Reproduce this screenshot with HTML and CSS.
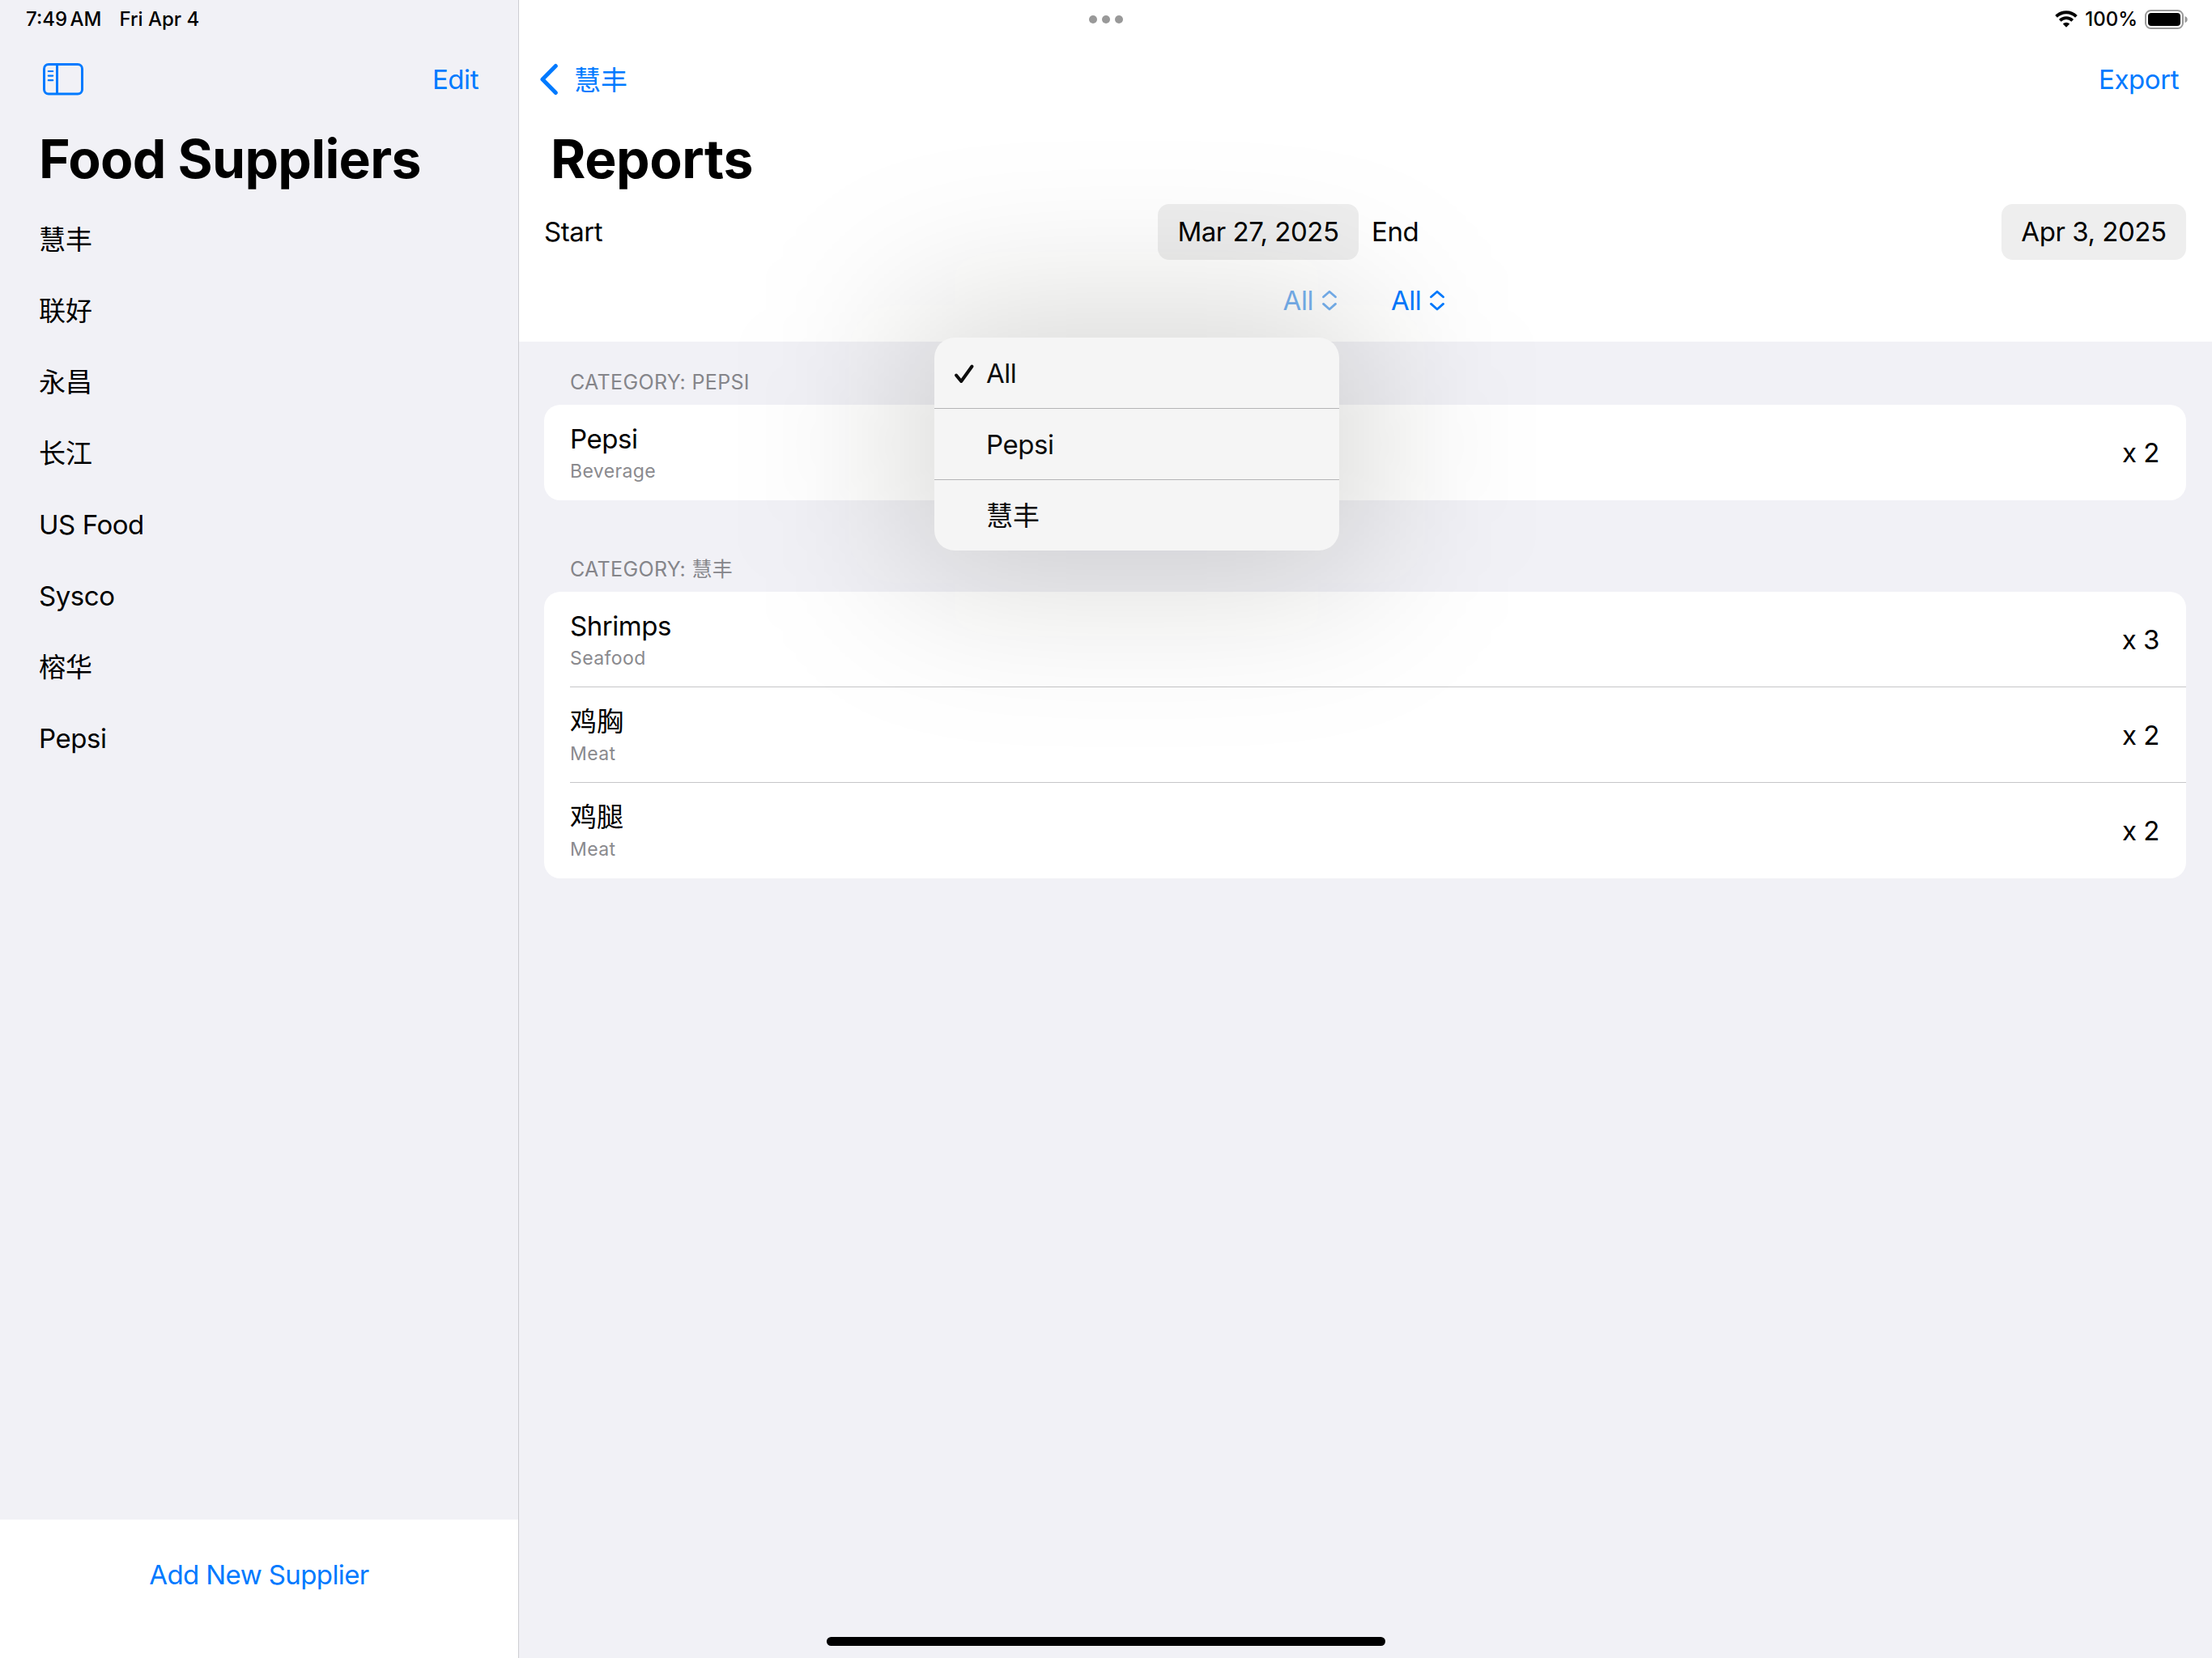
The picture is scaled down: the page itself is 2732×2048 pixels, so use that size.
FILE: index.html
```
<!DOCTYPE html>
<html lang="en">
<head>
  <meta charset="UTF-8">
  <title>Food Suppliers</title>
  <link rel="stylesheet" href="styles.css">
</head>
<body>
  <div class="app">
    <aside class="sidebar">
      <div class="status"><span class="time">7:49 AM</span><span>Fri Apr 4</span></div>
      <div class="nav">
        <svg width="50" height="40" viewBox="0 0 50 40" fill="none" stroke="#007aff" stroke-width="3">
          <rect x="1.5" y="1.5" width="47" height="36.5" rx="5.5"/>
          <path d="M17.5 2v36"/>
          <path d="M6.8 10h5.4M6.8 15.6h5.4M6.8 21.2h5.4" stroke-width="2.2" stroke-linecap="round"/>
        </svg>
        <a class="link">Edit</a>
      </div>
      <h1>Food Suppliers</h1>
      <ul class="suppliers">
        <li class="zh">慧丰</li>
        <li class="zh">联好</li>
        <li class="zh">永昌</li>
        <li class="zh">长江</li>
        <li>US Food</li>
        <li>Sysco</li>
        <li class="zh">榕华</li>
        <li>Pepsi</li>
      </ul>
      <div class="add"><a class="link">Add New Supplier</a></div>
    </aside>

    <main class="detail">
      <header class="top">
        <div class="status right">
          <svg width="28" height="21" viewBox="0 0 28 21" fill="none" stroke="#000" stroke-width="3.9">
            <path d="M1.6 7.4a17.6 17.6 0 0 1 24.8 0"/>
            <path d="M6.3 12.3a11 11 0 0 1 15.4 0"/>
            <path d="M9.8 16.4a6 6 0 0 1 8.4 0L14 20.7z" fill="#000" stroke="none"/>
          </svg>
          <span>100%</span>
          <svg width="54" height="24" viewBox="0 0 54 24">
            <rect x="1" y="1" width="46" height="22" rx="6.5" fill="none" stroke="#999" stroke-width="2"/>
            <rect x="4" y="4" width="40" height="16" rx="4" fill="#000"/>
            <path d="M49.5 8q3.2 1 3.2 4t-3.2 4z" fill="#999"/>
          </svg>
        </div>
        <div class="nav">
          <a class="link back">
            <svg width="24" height="40" viewBox="0 0 24 40" fill="none" stroke="#007aff" stroke-width="5" stroke-linecap="round" stroke-linejoin="round">
              <path d="M20.3 3.5L4 20l16.3 16.5"/>
            </svg>
            <span class="zh">慧丰</span>
          </a>
          <a class="link">Export</a>
        </div>
        <h1>Reports</h1>
        <div class="dates">
          <div class="field"><span class="label">Start</span><span class="pill">Mar 27, 2025</span></div>
          <div class="field"><span class="label">End</span><span class="pill short">Apr 3, 2025</span></div>
        </div>
        <div class="pickers">
          <a class="link picker active">All
            <svg width="20" height="28" viewBox="0 0 20 28" fill="none" stroke="currentColor" stroke-width="2.8" stroke-linecap="round" stroke-linejoin="round">
              <path d="M2.5 9.8L10 3.2l7.5 6.6M2.5 18.4l7.5 6.6 7.5-6.6"/>
            </svg>
          </a>
          <a class="link picker">All
            <svg width="20" height="28" viewBox="0 0 20 28" fill="none" stroke="currentColor" stroke-width="2.8" stroke-linecap="round" stroke-linejoin="round">
              <path d="M2.5 9.8L10 3.2l7.5 6.6M2.5 18.4l7.5 6.6 7.5-6.6"/>
            </svg>
          </a>
        </div>
      </header>

      <section>
        <h2>CATEGORY: PEPSI</h2>
        <div class="card">
          <div class="row">
            <div>
              <p class="name">Pepsi</p>
              <p class="type">Beverage</p>
            </div>
            <span>x 2</span>
          </div>
        </div>
      </section>

      <section>
        <h2>CATEGORY: 慧丰</h2>
        <div class="card">
          <div class="row">
            <div>
              <p class="name">Shrimps</p>
              <p class="type">Seafood</p>
            </div>
            <span>x 3</span>
          </div>
          <div class="row">
            <div>
              <p class="name zh">鸡胸</p>
              <p class="type">Meat</p>
            </div>
            <span>x 2</span>
          </div>
          <div class="row">
            <div>
              <p class="name zh">鸡腿</p>
              <p class="type">Meat</p>
            </div>
            <span>x 2</span>
          </div>
        </div>
      </section>
    </main>
  </div>

  <div class="dots"><i></i><i></i><i></i></div>

  <!-- supplier filter menu -->
  <div class="shadow"></div>
  <div class="menu">
    <div class="item">
      <svg width="26" height="26" viewBox="0 0 26 26" fill="none" stroke="#0c0c0c" stroke-width="4" stroke-linecap="round" stroke-linejoin="round">
        <path d="M3 14.5l6.2 7.5L22.5 3.5"/>
      </svg>
      All
    </div>
    <div class="item">Pepsi</div>
    <div class="item zh">慧丰</div>
  </div>

  <div class="home"></div>
</body>
</html>
```
FILE: styles.css
```
* {
  box-sizing: border-box;
}

body {
  margin: 0;
  width: 2732px;
  height: 2048px;
  overflow: hidden;
  background: #f1f1f6;
  color: #000;
  font-family: Inter, "Noto Sans CJK SC", sans-serif;
  font-size: 33px;
  letter-spacing: -0.45px;
}

h1, h2, p, ul {
  margin: 0;
  padding: 0;
}

svg {
  display: block;
  flex: none;
}

.app {
  display: flex;
  height: 2048px;
}

.sidebar {
  width: 641px;
  border-right: 1px solid #cdcdd2;
  display: flex;
  flex-direction: column;
}

.status {
  height: 47px;
  margin-bottom: 1px;
  display: flex;
  align-items: center;
  padding-left: 32px;
  font-size: 24px;
  font-weight: 500;
  letter-spacing: 0;
  gap: 22px;
}

.time {
  word-spacing: -3px;
}

.status.right {
  justify-content: flex-end;
  padding: 0 29px 0 0;
  gap: 9px;
}

.nav {
  height: 100px;
  display: flex;
  align-items: center;
  justify-content: space-between;
  padding: 0 49px 0 53px;
}

.link {
  color: #007aff;
}

.zh {
  letter-spacing: 0;
}

h1 {
  height: 96px;
  line-height: 96px;
  padding-left: 48px;
  font-size: 66px;
  font-weight: 700;
  letter-spacing: -0.7px;
}

.suppliers {
  list-style: none;
  padding: 8px 0 0 48px;
  flex: 1;
}

.suppliers li {
  height: 88px;
  line-height: 88px;
}

.add {
  height: 171px;
  padding-top: 48px;
  line-height: 40px;
  letter-spacing: -0.6px;
  background: #fff;
  text-align: center;
}

.detail {
  flex: 1;
}

.top {
  height: 422px;
  background: #fff;
}

.top .status {
  margin: 0;
}

.top .nav {
  height: 101px;
  padding: 0 41px 0 25px;
}

.back {
  display: flex;
  align-items: center;
  gap: 19px;
}

.back span {
  margin-bottom: 2px;
}

.top h1 {
  padding-left: 39px;
  letter-spacing: -0.4px;
}

.dates {
  display: flex;
  gap: 16px;
  padding: 8px 32px 0 31px;
}

.field {
  flex: 1;
  display: flex;
  align-items: center;
  justify-content: space-between;
}

.label {
  margin-bottom: 2px;
}

.pill {
  height: 69px;
  width: 248px;
  line-height: 69px;
  border-radius: 14px;
  background: #eee;
  text-align: center;
}

.short {
  width: 228px;
}

.pickers {
  display: flex;
  justify-content: center;
  gap: 66px;
  padding: 30px 3px 0 0;
  line-height: 40px;
}

.picker {
  display: flex;
  align-items: center;
  gap: 10px;
}

.active {
  color: #76b1f0;
}

section h2 {
  height: 78px;
  line-height: 36px;
  padding: 32px 0 0 63px;
  font-size: 25px;
  font-weight: 400;
  letter-spacing: 0.35px;
  color: #85858a;
}

section + section h2 {
  height: 113px;
  padding-top: 67px;
}

.card {
  margin: 0 32px 0 31px;
  border-radius: 20px;
  background: #fff;
  padding-left: 32px;
}

.row {
  height: 118px;
  display: flex;
  align-items: center;
  justify-content: space-between;
  padding-right: 33px;
  border-bottom: 1px solid #c6c6c8;
}

.row:last-child {
  border-bottom-color: transparent;
}

.name, .type {
  height: 40px;
  line-height: 40px;
}

.name {
  margin-top: 6px;
}

.type {
  font-size: 23px;
  letter-spacing: 0.4px;
  color: #8a8a8e;
}

.dots {
  position: absolute;
  left: 1345px;
  top: 19px;
  display: flex;
  gap: 6px;
}

.dots i {
  width: 10px;
  height: 10px;
  border-radius: 50%;
  background: #999;
}

.shadow {
  position: absolute;
  left: 1114px;
  top: 377px;
  width: 580px;
  height: 343px;
  border-radius: 60px;
  background: rgba(10, 10, 0, 0.155);
  filter: blur(100px);
}

.menu {
  position: absolute;
  left: 1154px;
  top: 417px;
  width: 500px;
  height: 263px;
  border-radius: 25px;
  background: #f5f5f5;
  color: #0c0c0c;
}

.item {
  position: relative;
  height: 88px;
  line-height: 87px;
  padding: 1px 0 0 64px;
  border-bottom: 1px solid #b4b4b6;
}

.item:last-child {
  border-bottom: none;
}

.item svg {
  position: absolute;
  left: 24px;
  top: 32px;
}

.home {
  position: absolute;
  left: 1021px;
  top: 2022px;
  width: 690px;
  height: 11px;
  border-radius: 6px;
  background: #000;
}
```
